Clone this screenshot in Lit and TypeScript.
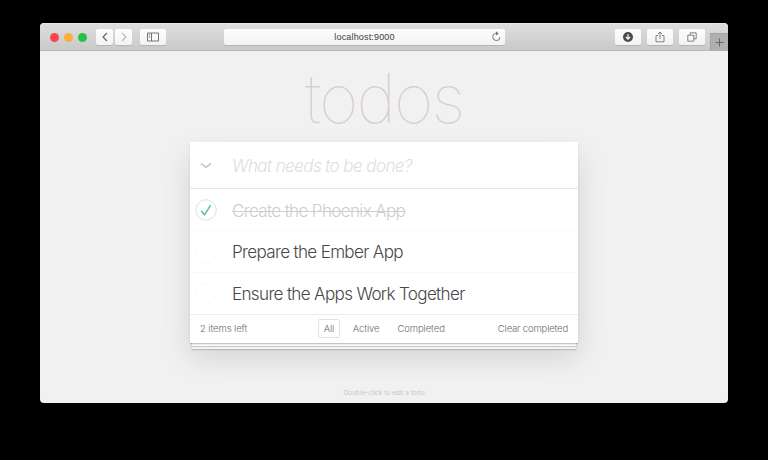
import { LitElement, html, css, svg } from "lit";
import { customElement, property } from "lit/decorators.js";
import { classMap } from "lit/directives/class-map.js";

@customElement("browser-toolbar")
class BrowserToolbar extends LitElement {
  static styles = css`
    :host { display: block; height: 28px; }
    .bar { height: 28px; box-sizing: border-box; display: flex; align-items: center; position: relative;
      background: linear-gradient(#dedede, #c9c9c9); border-bottom: 1px solid #b9b9b9;
      border-top: 1px solid #e9e9e9; border-radius: 4px 4px 0 0; padding: 0 23px 0 9.5px; }
    .dot { width: 9px; height: 9px; border-radius: 50%; margin-right: 5px; }
    .red { background: #fb4549; } .amber { background: #fcaf3f; } .green { background: #28c148; }
    .btn { height: 16px; background: linear-gradient(#fdfdfd, #f3f3f3); border-radius: 2px; box-shadow: 0 1px 0.5px #b4b4b4;
      display: flex; align-items: center; justify-content: center; color: #666; }
    svg { display: block; fill: none; stroke: currentColor; }
    .nav { display: flex; gap: 2px; margin: 0 8px 0 4.5px; }
    .nav .btn { width: 17px; } .nav .off { color: #b5b5b5; }
    .side { width: 26px; }
    .url { width: 281px; margin-left: 58px; position: relative; font: 9px "Liberation Sans", sans-serif; letter-spacing: .17px; color: #3c3c3c; }
    .reload { position: absolute; right: 3px; top: 2px; color: #777; }
    .tools { display: flex; gap: 6px; margin-left: auto; }
    .tools .btn { width: 26px; }
    .plus { position: absolute; right: 0; bottom: -1px; width: 18px; height: 18px; box-sizing: border-box; background: #b0b0b0;
      border-left: 1px solid #a3a3a3; border-top: 1px solid #a3a3a3; color: #666; display: flex; align-items: center; justify-content: center; }
  `;
  render() {
    return html`<div class="bar">
      <i class="dot red"></i><i class="dot amber"></i><i class="dot green"></i>
      <div class="nav">
        <div class="btn"><svg width="8" height="10"><path d="M6 1 2 5l4 4" stroke-width="1.2"/></svg></div>
        <div class="btn off"><svg width="8" height="10"><path d="m2 1 4 4-4 4" stroke-width="1.1"/></svg></div>
      </div>
      <div class="btn side"><svg width="12" height="10"><path d="M.5 1h11v8H.5zM4.5 1v8M1.8 3h1.4M1.8 5h1.4" stroke-width=".9"/></svg></div>
      <div class="btn url">localhost:9000
        <svg class="reload" width="11" height="12"><path d="M9 6.2A3.6 3.6 0 1 1 5.8 2.4"/><path d="m5 .2 2.8 2.2L5 4.5z" fill="currentColor" stroke="none"/></svg>
      </div>
      <div class="tools">
        <div class="btn"><svg width="12" height="12"><circle cx="6" cy="6" r="5" fill="#4b4b4b" stroke="none"/><path d="M6 3v5M3.9 6 6 8.1 8.1 6" stroke="#fff" stroke-width="1.1"/></svg></div>
        <div class="btn"><svg width="12" height="12"><path d="M4.2 4.5H2v6.3h8V4.5H7.8M6 8V1M4 3l2-2 2 2" stroke-width=".8"/></svg></div>
        <div class="btn"><svg width="12" height="12"><path d="M1.8 4.2h6v6h-6zM4.2 4V1.8h6v6H8" stroke-width=".8"/></svg></div>
      </div>
      <div class="plus"><svg width="9" height="9"><path d="M4.5.5v8M.5 4.5h8"/></svg></div>
    </div>`;
  }
}

@customElement("todo-item")
class TodoItem extends LitElement {
  @property() label = "";
  @property({ type: Boolean }) done = false;
  static styles = css`
    :host { display: block; }
    .row { height: 42px; box-sizing: border-box; display: flex; align-items: center; border-bottom: 1px solid #f8f8f8; }
    .mark { width: 24px; height: 24px; margin: 0 14px 0 4px; }
    svg { display: block; fill: none; }
    .text { font: 300 17.1px "Inter", sans-serif; letter-spacing: -0.68px; color: #484848; white-space: nowrap; }
    .done { color: #cfcdcd; text-decoration: line-through; text-decoration-thickness: 1px; padding-top: 1px; }
  `;
  render() {
    return html`<div class="row">
      <svg class="mark" viewBox="0 0 24 24">
        <circle cx="12" cy="12" r="10.3" stroke=${this.done ? "#dfe0df" : "#fafafa"}/>
        ${this.done ? svg`<path d="m7.2 12.8 3.4 4 6-9.6" stroke="#55bea0" stroke-width="1.5"/>` : null}
      </svg>
      <span class=${classMap({ text: true, done: this.done })}>${this.label}</span>
    </div>`;
  }
}

@customElement("app-root")
class AppRoot extends LitElement {
  static styles = css`
    :host { display: block; width: 768px; height: 460px; background: #000; overflow: hidden; font-family: "Inter", sans-serif; }
    .frame { padding: 23px 40px 0; }
    .window { height: 380px; background: #f2f1f2; border-radius: 4px; overflow: hidden; }
    h1 { margin: 0; height: 91px; text-align: center; font: 100 68px/95px "Inter", sans-serif; letter-spacing: -1.9px; color: #d9cfcf; }
    .card { width: 388px; height: 201px; margin: 0 auto; background: #fff;
      box-shadow: 0 1px 1px rgba(0,0,0,.2), 0 5px 0 -2px #f6f6f6, 0 6px 1px -2px rgba(0,0,0,.17),
        0 8px 0 -2px #f6f6f6, 0 9px 1px -2px rgba(0,0,0,.17), 0 14px 28px rgba(0,0,0,.13); }
    .entry { height: 47px; box-sizing: border-box; border-bottom: 1px solid #e8e8e8; display: flex; align-items: center; }
    .entry svg { margin: 2px 20px 0 10px; fill: none; stroke: #ccc; stroke-width: 2; }
    .hint { font: italic 300 17.1px "Inter", sans-serif; letter-spacing: -.63px; color: #dedddd; padding-top: 1px; }
    .foot { height: 29px; margin-top: -1px; border-top: 1px solid #ececec; box-sizing: border-box; display: grid;
      grid-template-columns: 1fr auto 1fr; align-items: center; padding: 0 10px 2px; font-size: 9.5px; font-weight: 300; letter-spacing: -.1px; color: #6c6c6c; }
    .filters { display: flex; gap: 8px; }
    .filter { border: 1px solid transparent; border-radius: 2px; padding: 0 4px; line-height: 17px; }
    .active { border-color: #e6e0e0; padding: 0 4.5px; }
    .clear { text-align: right; letter-spacing: -.17px; }
    .info { margin-top: 45px; text-align: center; font-size: 6.5px; line-height: 11px; color: #c8c6c7; }
  `;
  render() {
    return html`<div class="frame"><div class="window">
      <browser-toolbar></browser-toolbar>
      <h1>todos</h1>
      <div class="card">
        <div class="entry"><svg width="12" height="8"><path d="m1 1.5 5 3.7 5-3.7"/></svg><span class="hint">What needs to be done?</span></div>
        <todo-item label="Create the Phoenix App" done></todo-item>
        <todo-item label="Prepare the Ember App"></todo-item>
        <todo-item label="Ensure the Apps Work Together"></todo-item>
        <div class="foot"><span>2 items left</span>
          <div class="filters"><span class="filter active">All</span><span class="filter">Active</span><span class="filter">Completed</span></div>
          <span class="clear">Clear completed</span></div>
      </div>
      <div class="info">Double-click to edit a todo</div>
    </div></div>`;
  }
}
